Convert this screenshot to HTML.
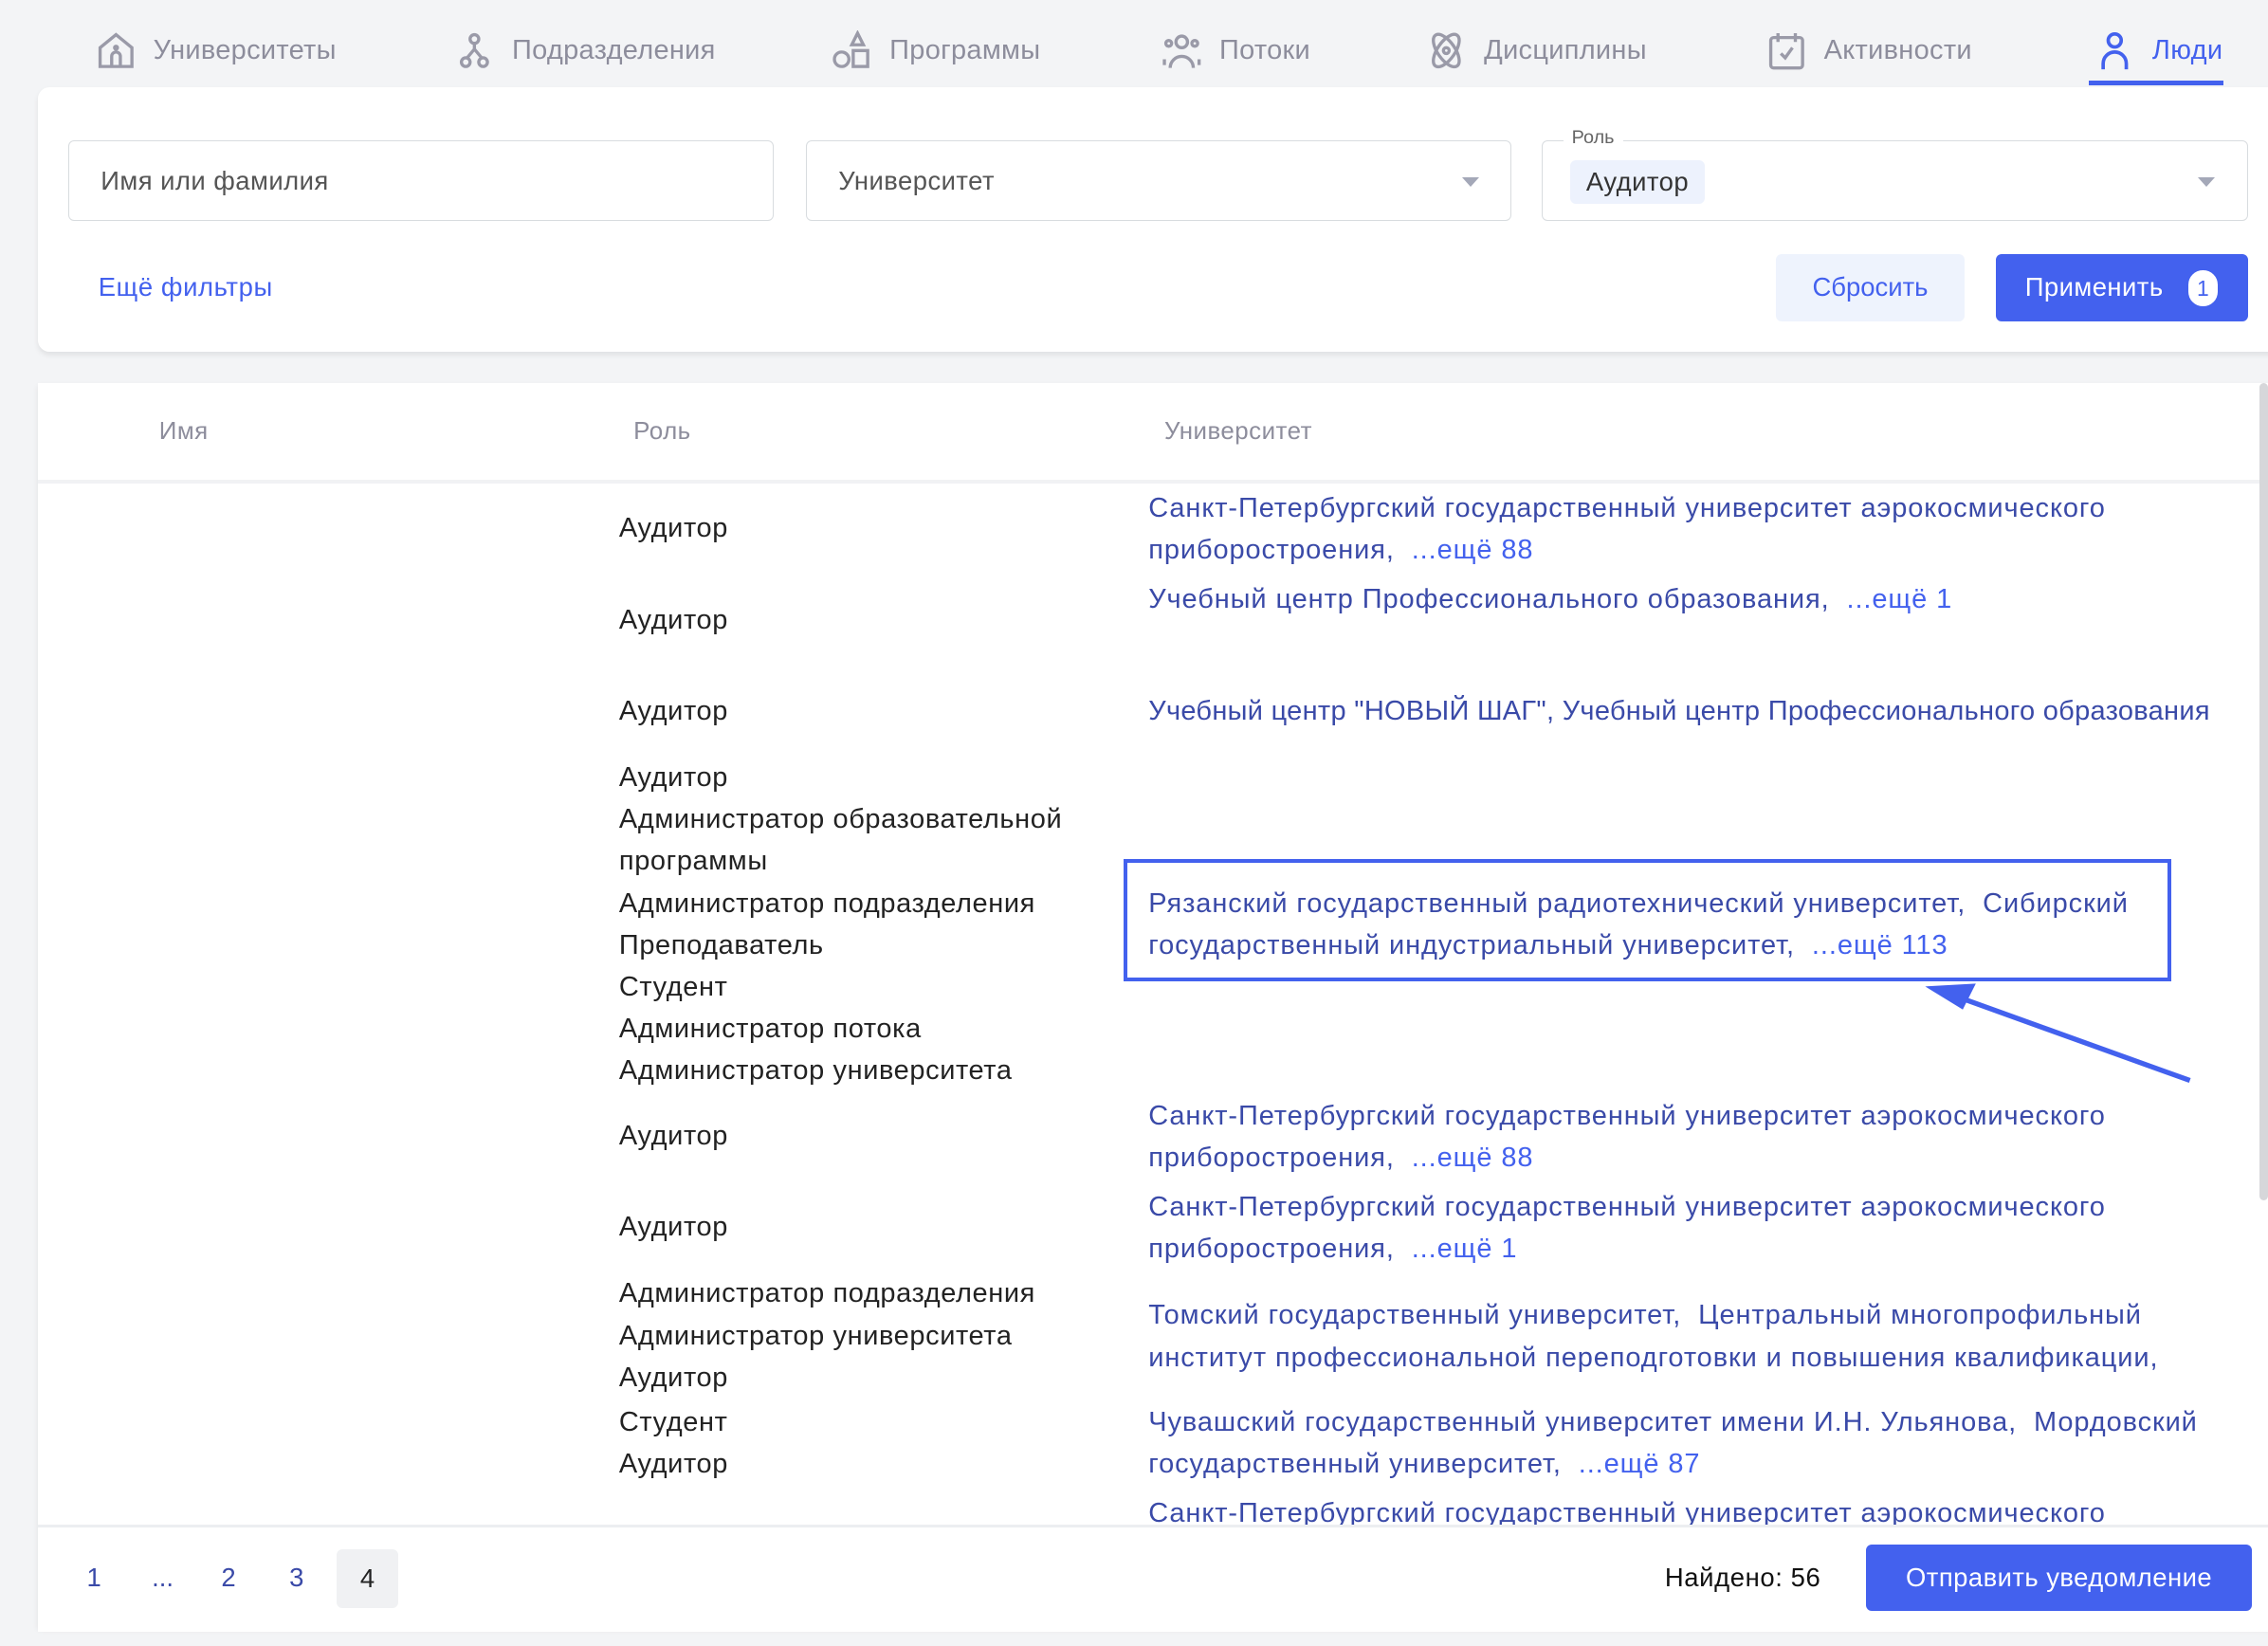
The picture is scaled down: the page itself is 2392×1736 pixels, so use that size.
<!DOCTYPE html>
<html><head><meta charset="utf-8"><style>
html,body{margin:0;padding:0;}
body{width:1568px;height:1138px;zoom:1.5255;background:#f3f4f6;font-family:"Liberation Sans",sans-serif;position:relative;overflow:hidden;}
.a{position:absolute;white-space:nowrap;}
.tab{position:absolute;top:22px;height:26px;font-size:19px;color:#8d8d9c;display:flex;align-items:center;gap:12px;letter-spacing:0.2px;}
.tab svg{width:28px;height:28px;}
.card{position:absolute;background:#fff;border-radius:8px;box-shadow:0 2px 4px rgba(0,0,0,.08);}
.inp{position:absolute;top:97px;height:56px;border:1px solid #d8dcdf;border-radius:4px;box-sizing:border-box;font-size:18px;color:#555;}
.inp span.t{position:absolute;left:22px;top:17px;letter-spacing:0.3px;}
.tri{position:absolute;right:22px;top:25px;width:0;height:0;border-left:6px solid transparent;border-right:6px solid transparent;border-top:7px solid #a4a8b8;}
.r{position:absolute;left:428px;font-size:19px;color:#222;line-height:29px;white-space:nowrap;letter-spacing:0.4px;}
.u{position:absolute;left:794px;font-size:19px;color:#3a4aa8;line-height:29px;white-space:nowrap;letter-spacing:0.6px;}
.u b{font-weight:normal;color:#4361ee;}
.h{position:absolute;top:289px;font-size:17px;color:#8d8d9c;letter-spacing:0.3px;}
.pg{position:absolute;top:1080px;font-size:18px;color:#3a4aa8;}
</style></head><body>
<div class="tab" style="left:66px"><svg viewBox="0 0 28 28" fill="none" stroke="#9a9aa8" stroke-width="2.2"><path d="M3 12 L14 3 L25 12 V25 H3 Z"/><path d="M11 25 V18 a3 3 0 0 1 6 0 V25"/><circle cx="14" cy="12" r="1"/></svg>Университеты</div>
<div class="tab" style="left:314px"><svg viewBox="0 0 28 28" fill="none" stroke="#9a9aa8" stroke-width="2.2"><circle cx="14" cy="6" r="3"/><circle cx="8" cy="22" r="3"/><circle cx="20" cy="22" r="3"/><path d="M14 9 V13 L9 19 M14 13 L19 19"/></svg>Подразделения</div>
<div class="tab" style="left:575px"><svg viewBox="0 0 28 28" fill="none" stroke="#9a9aa8" stroke-width="2.2"><path d="M18 2 L22 10 H14 Z"/><circle cx="7" cy="20" r="5"/><rect x="15" y="14" width="10" height="11"/></svg>Программы</div>
<div class="tab" style="left:803px"><svg viewBox="0 0 28 28" fill="none" stroke="#9a9aa8" stroke-width="2.2"><circle cx="14" cy="8" r="4"/><path d="M6 26 a8 8 0 0 1 16 0"/><circle cx="5" cy="9" r="2"/><circle cx="23" cy="9" r="2"/><path d="M2 20 v4 M26 20 v4"/></svg>Потоки</div>
<div class="tab" style="left:986px"><svg viewBox="0 0 28 28" fill="none" stroke="#9a9aa8" stroke-width="2.2"><ellipse cx="14" cy="14" rx="6" ry="13" transform="rotate(35 14 14)"/><ellipse cx="14" cy="14" rx="6" ry="13" transform="rotate(-35 14 14)"/><circle cx="14" cy="14" r="2"/></svg>Дисциплины</div>
<div class="tab" style="left:1221px"><svg viewBox="0 0 28 28" fill="none" stroke="#9a9aa8" stroke-width="2.2"><rect x="3" y="5" width="22" height="21" rx="2"/><path d="M8 2 v6 M20 2 v6 M10 16 l3 3 l5 -7"/></svg>Активности</div>
<div class="tab" style="left:1448px;color:#4361ee"><svg viewBox="0 0 28 28" fill="none" stroke="#4361ee" stroke-width="2.4"><circle cx="14" cy="7" r="4.5"/><path d="M6 27 v-4 a8 8 0 0 1 16 0 v4"/></svg>Люди</div>
<div class="a" style="left:1444px;top:56px;width:93px;height:3px;background:#4361ee"></div>

<div class="card" style="left:26px;top:60px;width:1560px;height:183px;border-radius:8px"></div>
<div class="inp" style="left:47px;width:488px"><span class="t">Имя или фамилия</span></div>
<div class="inp" style="left:557px;width:488px"><span class="t">Университет</span><i class="tri"></i></div>
<div class="inp" style="left:1066px;width:488px"><span class="a" style="left:14px;top:-10px;background:#fff;padding:0 6px;font-size:13px;color:#666">Роль</span><span class="a" style="left:19px;top:13px;height:30px;padding:0 11px;line-height:30px;background:#edf2fd;border-radius:4px;color:#333;font-size:18px;letter-spacing:0.3px">Аудитор</span><i class="tri"></i></div>
<div class="a" style="left:68px;top:188px;font-size:18px;color:#4361ee;letter-spacing:0.4px">Ещё фильтры</div>
<div class="a" style="left:1228px;top:176px;width:130px;height:46px;background:#eef3fd;border-radius:4px;color:#4361ee;font-size:18px;text-align:center;line-height:46px">Сбросить</div>
<div class="a" style="left:1380px;top:176px;width:174px;height:46px;background:#4361ee;border-radius:4px;color:#fff;font-size:18px;line-height:46px"><span style="position:absolute;left:20px;letter-spacing:0.3px">Применить</span><span style="position:absolute;left:133px;top:11px;width:20px;height:25px;background:#fff;border-radius:10px;color:#4361ee;font-size:15px;line-height:25px;text-align:center">1</span></div>

<div class="card" style="left:26px;top:265px;width:1560px;height:860px;border-radius:0;overflow:hidden"></div>
<div class="h" style="left:110px">Имя</div>
<div class="h" style="left:438px">Роль</div>
<div class="h" style="left:805px">Университет</div>
<div class="a" style="left:26px;top:332px;width:1536px;height:2px;background:#f1f2f4"></div>
<div class="a" style="left:1562px;top:265px;width:6px;height:565px;background:#d6d7da;border-radius:3px"></div>

<div class="r" style="top:351px">Аудитор</div>
<div class="r" style="top:414px">Аудитор</div>
<div class="r" style="top:477px">Аудитор</div>
<div class="r" style="top:523px">Аудитор<br>Администратор образовательной<br>программы<br>Администратор подразделения<br>Преподаватель<br>Студент<br>Администратор потока<br>Администратор университета</div>
<div class="r" style="top:771px">Аудитор</div>
<div class="r" style="top:834px">Аудитор</div>
<div class="r" style="top:880px">Администратор подразделения<br>Администратор университета<br>Аудитор</div>
<div class="r" style="top:969px">Студент<br>Аудитор</div>

<div class="u" style="top:337px">Санкт-Петербургский государственный университет аэрокосмического<br>приборостроения,&nbsp; <b>...ещё 88</b></div>
<div class="u" style="top:400px">Учебный центр Профессионального образования,&nbsp; <b>...ещё 1</b></div>
<div class="u" style="top:477px;letter-spacing:0.2px">Учебный центр "НОВЫЙ ШАГ", Учебный центр Профессионального образования</div>
<div class="u" style="top:610px">Рязанский государственный радиотехнический университет,&nbsp; Сибирский<br>государственный индустриальный университет,&nbsp; <b>...ещё 113</b></div>
<div class="u" style="top:757px">Санкт-Петербургский государственный университет аэрокосмического<br>приборостроения,&nbsp; <b>...ещё 88</b></div>
<div class="u" style="top:820px">Санкт-Петербургский государственный университет аэрокосмического<br>приборостроения,&nbsp; <b>...ещё 1</b></div>
<div class="u" style="top:895px">Томский государственный университет,&nbsp; Центральный многопрофильный<br>институт профессиональной переподготовки и повышения квалификации,</div>
<div class="u" style="top:969px">Чувашский государственный университет имени И.Н. Ульянова,&nbsp; Мордовский<br>государственный университет,&nbsp; <b>...ещё 87</b></div>
<div class="u" style="top:1032px">Санкт-Петербургский государственный университет аэрокосмического</div>

<div class="a" style="left:777px;top:594px;width:719px;height:79px;border:3px solid #4361ee"></div>
<svg class="a" style="left:0;top:0" width="1568" height="1138"><line x1="1514" y1="747" x2="1350" y2="688" stroke="#4361ee" stroke-width="3.5"/><path d="M1331 682 L1366 680 L1357 698 Z" fill="#4361ee"/></svg>

<div class="a" style="left:26px;top:1054px;width:1560px;height:72px;background:#fff;border-top:2px solid #eceef1"></div>
<div class="pg" style="left:60px">1</div>
<div class="pg" style="left:105px">...</div>
<div class="pg" style="left:153px">2</div>
<div class="pg" style="left:200px">3</div>
<div class="a" style="left:233px;top:1071px;width:42px;height:41px;background:#f0f1f3;border-radius:4px;font-size:18px;color:#222;text-align:center;line-height:41px">4</div>
<div class="a" style="left:1151px;top:1080px;font-size:18px;color:#111;letter-spacing:0.4px">Найдено: 56</div>
<div class="a" style="left:1290px;top:1068px;width:267px;height:46px;background:#4361ee;border-radius:4px;color:#fff;font-size:18px;text-align:center;line-height:46px;letter-spacing:0.3px">Отправить уведомление</div>
</body></html>
